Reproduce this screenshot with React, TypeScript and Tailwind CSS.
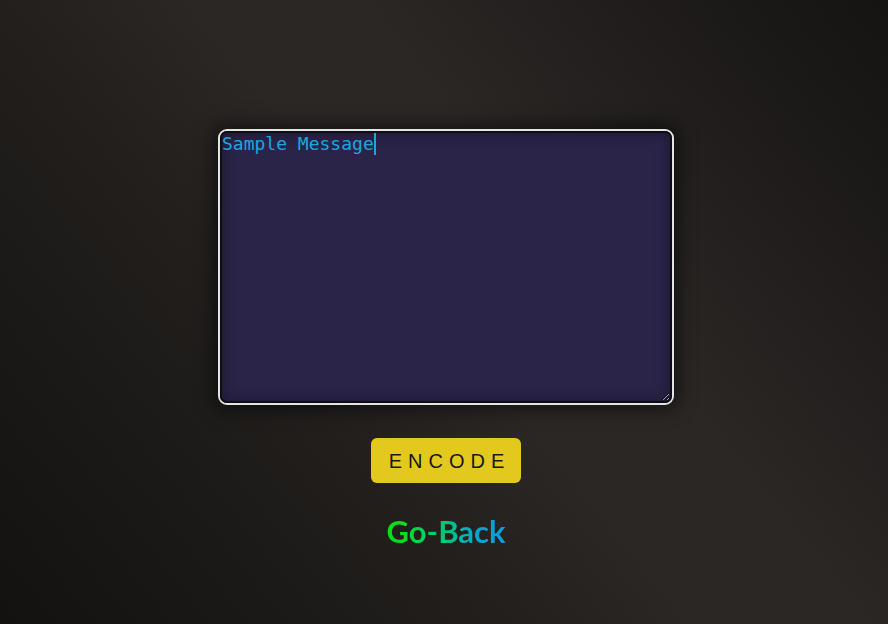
import { useEffect, useRef } from "react";

export default function App() {
  const ref = useRef<HTMLTextAreaElement>(null);

  useEffect(() => {
    const el = ref.current;
    if (!el) return;
    el.focus();
    el.setSelectionRange(el.value.length, el.value.length);
  }, []);

  return (
    <main className="min-h-screen w-full bg-[linear-gradient(51deg,#131211_0%,#1c1a18_22%,#221f1d_36%,#2b2725_50%,#2b2725_62%,#201d1c_80%,#151413_100%)]">
      <div className="flex flex-col items-center pt-[129px] pl-[4px]">
        {/* message box */}
        <div className="relative inline-flex rounded-[9px] border-2 border-[#e4e4e4] shadow-[0_0_18px_5px_rgba(0,0,0,0.5)]">
          <textarea
            ref={ref}
            defaultValue="Sample Message"
            spellCheck={false}
            className="block h-[272px] w-[452px] rounded-[7px] border-2 border-[#0e0d10] bg-[#2a2449] px-[0px] pt-[0px] text-[18px] leading-[21px] text-[#1aa7e0] caret-[#1aa7e0] outline-none scheme-dark shadow-[inset_0_0_12px_3px_rgba(20,16,34,0.45)] [font-family:'DejaVu_Sans_Mono',monospace]"
          />
          <span className="pointer-events-none absolute left-[154px] top-[2px] h-[22px] w-[2px] bg-[#1aa7e0]" />
        </div>

        <button className="mt-[33px] flex h-[45px] w-[150px] items-center justify-center rounded-[6px] bg-[#e3c91d] pl-[7px] text-[20px] tracking-[6px] text-[#191814] [font-family:'Liberation_Sans',Arial,sans-serif]">
          ENCODE
        </button>

        <a
          href="#"
          className="mt-[30px] bg-gradient-to-r from-[#05e01a] from-15% via-[#07c47a] to-[#0aa0dc] to-80% bg-clip-text text-[31px] font-bold leading-[37px] text-transparent [font-family:'Comic_Sans_MS',Lato,sans-serif]"
        >
          Go-Back
        </a>
      </div>
    </main>
  );
}
